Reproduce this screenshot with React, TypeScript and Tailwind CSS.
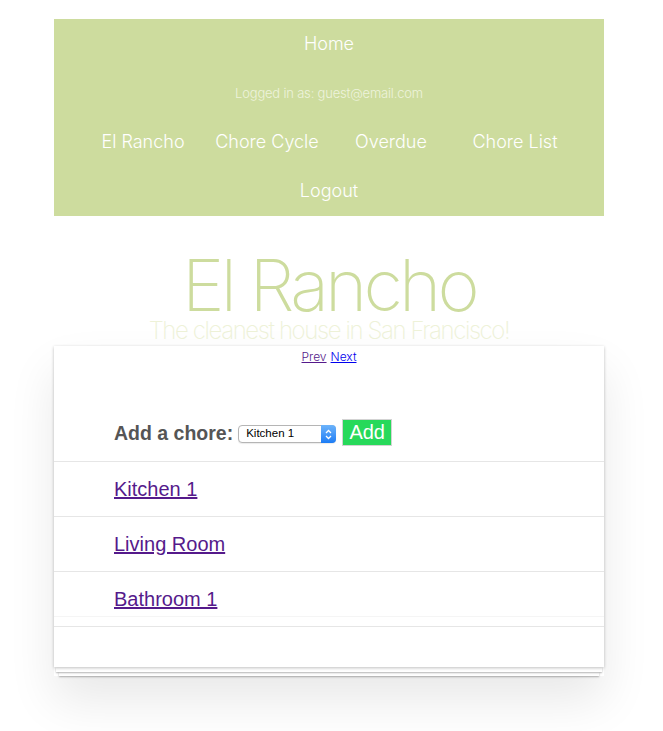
import React from "react";

const light = { fontFamily: '"Inter", "Liberation Sans", sans-serif' };

function NavLink({ children }: { children: React.ReactNode }) {
  return (
    <a href="#" className="text-[18px] font-light text-white leading-none">
      {children}
    </a>
  );
}

function ChoreSelect() {
  return (
    <div className="relative inline-flex h-[18px] w-[98px] items-center rounded-[4px] border border-[#b5b5b5] bg-white pl-[7px] shadow-[0_1px_1px_rgba(0,0,0,0.08)]">
      <span
        className="text-[11.5px] text-black leading-none"
        style={{ fontFamily: '"Liberation Sans", Arial, sans-serif' }}
      >
        Kitchen 1
      </span>
      {/* mac style stepper on the right */}
      <span className="absolute right-[-1px] top-[-1px] flex h-[18px] w-[15px] items-center justify-center rounded-r-[4px] bg-gradient-to-b from-[#6cb3fa] to-[#1a7cf5]">
        <svg width="7" height="11" viewBox="0 0 7 11" fill="none" stroke="white" strokeWidth="1.3">
          <path d="M1 4 L3.5 1.5 L6 4" />
          <path d="M1 7 L3.5 9.5 L6 7" />
        </svg>
      </span>
    </div>
  );
}

function ChoreRow({ name }: { name: string }) {
  return (
    <div className="flex h-[55px] items-center border-t border-[#e6e6e6] pl-[60px]">
      <a href="#" className="text-[20px] text-[#551a8b] underline leading-none">
        {name}
      </a>
    </div>
  );
}

export default function App() {
  return (
    <div
      className="min-h-[731px] w-full bg-white pt-[19px] pb-[40px]"
      style={{ fontFamily: '"Liberation Sans", Arial, sans-serif' }}
    >
      <div className="ml-[54px] w-[550px]">
        {/* top nav */}
        <nav className="flex h-[197px] flex-col items-center bg-[#cddc9e]" style={light}>
          <div className="flex h-[50px] items-center">
            <NavLink>Home</NavLink>
          </div>
          <div className="flex h-[48px] items-center pt-[2px] text-[13px] font-light text-[#eef3dc] tracking-[-0.2px]">
            Logged in as: guest@email.com
          </div>
          <div className="flex h-[50px] items-center">
            {["El Rancho", "Chore Cycle", "Overdue", "Chore List"].map((item) => (
              <div key={item} className="flex w-[124px] justify-center">
                <NavLink>{item}</NavLink>
              </div>
            ))}
          </div>
          <div className="flex h-[48px] items-center">
            <NavLink>Logout</NavLink>
          </div>
        </nav>

        {/* heading */}
        <div className="flex flex-col items-center pt-[33px]" style={light}>
          <h1 className="text-[72px] font-extralight leading-[72px] tracking-[-3.8px] text-[#cddc9e]">
            El Rancho
          </h1>
          <p className="mt-[-2px] text-[24px] font-extralight leading-[24px] tracking-[-1.4px] text-[#eef2d8]">
            The cleanest house in San Francisco!
          </p>
        </div>

        {/* card with stacked paper */}
        <div className="relative mt-[3px] shadow-[0_25px_45px_rgba(0,0,0,0.09)]">
          <div className="relative z-10 h-[321px] bg-white shadow-[0_1px_3px_rgba(0,0,0,0.25)]">
            <div className="flex justify-center pt-[4px] text-[12px] leading-[14px]" style={light}>
              <a href="#" className="font-light text-[#551a8b] underline">
                Prev
              </a>
              <span className="w-[4px]" />
              <a href="#" className="font-light text-[#0000ee] underline">
                Next
              </a>
            </div>
            <div className="flex h-[97px] items-center pl-[60px] pt-[43px]">
              <span className="text-[19.5px] font-bold text-[#555555]">Add a chore:</span>
              <span className="w-[5px]" />
              <ChoreSelect />
              <button className="ml-[6px] mt-[-4px] flex h-[27px] w-[50px] items-center justify-center border border-[#d3d3d3] bg-[#27d95a] text-[20px] text-white">
                Add
              </button>
            </div>
            <ChoreRow name="Kitchen 1" />
            <ChoreRow name="Living Room" />
            <div className="flex h-[45px] items-center border-t border-[#e6e6e6] pl-[60px] pt-[10px]">
              <a href="#" className="text-[20px] text-[#551a8b] underline leading-none">
                Bathroom 1
              </a>
            </div>
            <div className="h-[10px] border-t border-[#f5f5f5]" />
            <div className="border-t border-[#e6e6e6]" />
          </div>
          <div className="relative z-[5] mx-[2px] h-[5px] bg-white shadow-[0_1px_2px_rgba(0,0,0,0.3)]" />
          <div className="mx-[5px] h-[4px] bg-white shadow-[0_1px_2px_rgba(0,0,0,0.3)]" />
        </div>
      </div>
    </div>
  );
}
